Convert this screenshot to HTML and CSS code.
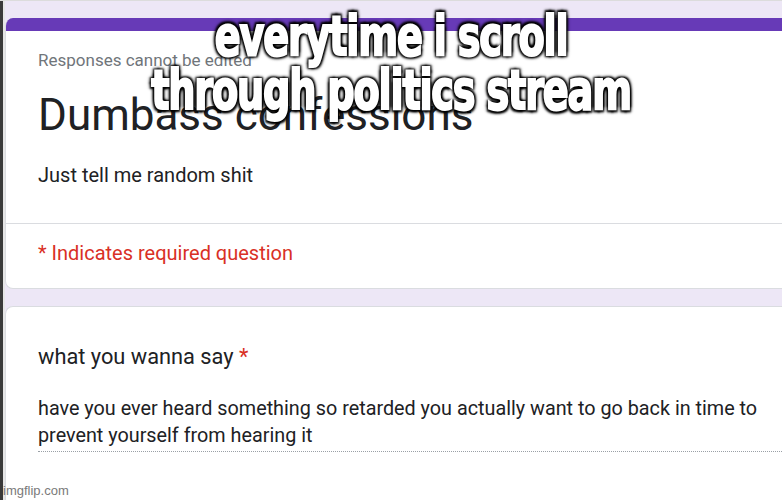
FILE: index.html
```html
<!DOCTYPE html>
<html>
	<head>
		<title>Dumbass confessions</title>
		<link rel="stylesheet" href="styles.css">
	</head>
	<body>
		<div class="edge"></div>
		<div class="page">
			<div class="card header-card">
				<div class="accent"></div>
				<div class="note">Responses cannot be edited</div>
				<h1 class="title">Dumbass confessions</h1>
				<div class="desc">Just tell me random shit</div>
				<div class="required">* Indicates required question</div>
			</div>
			<div class="card question-card">
				<div class="question">what you wanna say <span class="star">*</span></div>
				<div class="answer">have you ever heard something so retarded you actually want to go back in time to prevent yourself from hearing it</div>
			</div>
		</div>
		<div class="caption">everytime i scroll<br>through politics stream</div>
		<div class="watermark">imgflip.com</div>
	</body>
</html>
```
FILE: styles.css
```css
html, body {
	margin: 0;
}
body {
	width: 782px;
	height: 500px;
	overflow: hidden;
	display: flex;
	background: #ede7f6;
	font-family: Roboto, "Liberation Sans", sans-serif;
	border-top: 1px solid #dcdcdc;
	box-sizing: border-box;
	position: relative;
}

.edge {
	width: 3px;
	background: #3a3a3a;
	border-right: 2px solid #e6e6e6;
	flex: none;
}

.page {
	flex: 1;
	padding-top: 17px;
	display: flex;
	flex-direction: column;
	gap: 17px;
}

.card {
	background: #fff;
	border: 1px solid #dadce0;
	border-right: none;
	border-radius: 8px 0 0 8px;
	overflow: hidden;
}

.header-card {
	height: 271px;
	box-sizing: border-box;
	border-top: none;
	flex: none;
}
.accent {
	height: 13px;
	background: #673ab7;
}
.note {
	margin: 19px 0 0 32px;
	font-size: 17px;
	line-height: 20px;
	color: #70757a;
}
.title {
	margin: 20px 0 0 32px;
	font-size: 44px;
	font-weight: 400;
	line-height: 50px;
	color: #202124;
}
.desc {
	margin: 23px 0 0 0;
	padding: 0 0 36px 32px;
	font-size: 20px;
	line-height: 24px;
	color: #202124;
	border-bottom: 1px solid #dadce0;
}
.required {
	padding: 17px 0 0 32px;
	font-size: 20px;
	line-height: 24px;
	color: #d93025;
}

.question-card {
	flex: 1;
	border-bottom: none;
	border-radius: 8px 0 0 0;
	padding: 37px 0 0 32px;
}
.question {
	font-size: 21.8px;
	line-height: 26px;
	color: #202124;
}
.star {
	color: #d93025;
}
.answer {
	margin-top: 25px;
	font-size: 19.8px;
	line-height: 27px;
	color: #202124;
	padding-bottom: 2px;
	border-bottom: 1px dotted #9aa0a6;
}

.caption {
	position: absolute;
	top: 8px;
	left: 0;
	right: 0;
	text-align: center;
	font-family: "DejaVu Sans Condensed", "DejaVu Sans", sans-serif;
	font-weight: bold;
	font-size: 42.5px;
	line-height: 42.3px;
	letter-spacing: -1.2px;
	color: #fff;
	-webkit-text-stroke: 1.6px #fff;
	transform: scaleY(1.3);
	transform-origin: top;
	text-shadow: 2px 2px 2px #000, -2px -2px 2px #000, 2px -2px 2px #000, -2px 2px 2px #000, 0 0 5px #000;
}

.watermark {
	position: absolute;
	left: 3px;
	bottom: 2px;
	font-family: "Liberation Sans", sans-serif;
	font-size: 13px;
	color: #7a7a7a;
}
```
